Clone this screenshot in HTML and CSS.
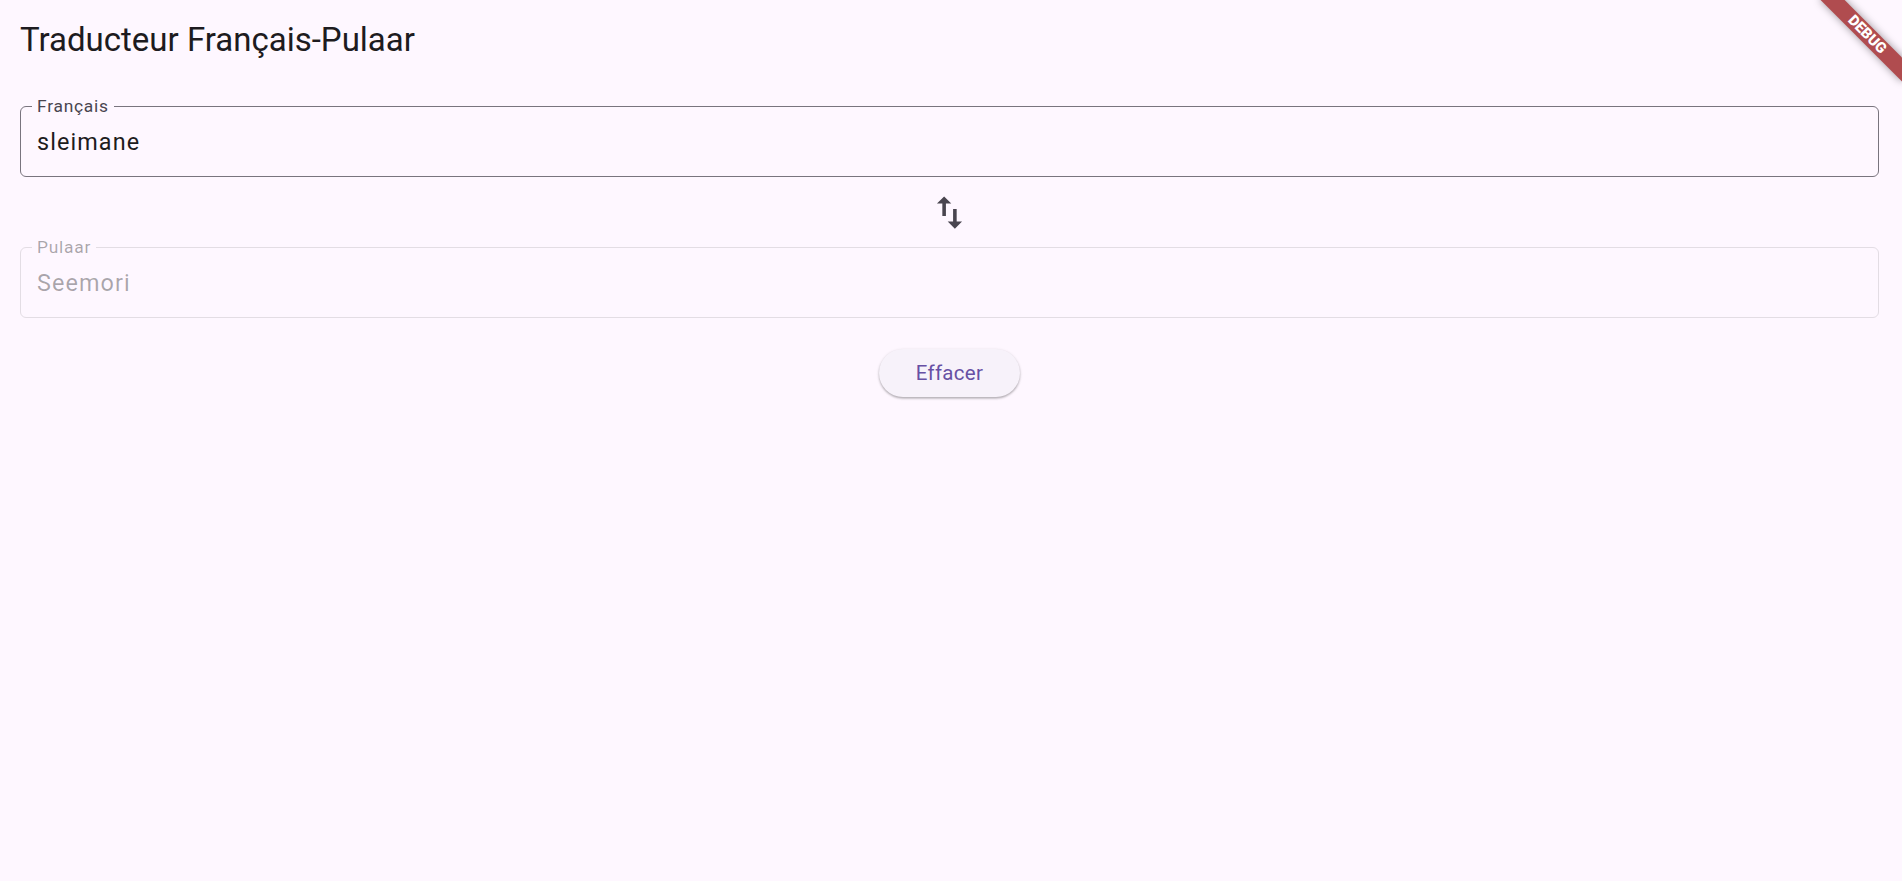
FILE: index.html
```html
<!DOCTYPE html>
<html lang="fr">
<head>
<meta charset="utf-8">
<title>Traducteur Français-Pulaar</title>
<link rel="stylesheet" href="styles.css">
</head>
<body>
<div class="app">
  <header class="appbar">
    <h1 class="appbar-title">Traducteur Français-Pulaar</h1>
  </header>
  <main class="content">
    <div class="field field-enabled">
      <span class="field-label">Français</span>
      <div class="field-value">sleimane</div>
    </div>
    <div class="swap-row">
      <button class="icon-button" type="button" aria-label="Inverser">
        <svg class="swap-icon" viewBox="0 0 24 24" aria-hidden="true">
          <path d="M16 17.01V10h-2v7.01h-3L15 21l4-3.99h-3zM9 3L5 6.99h3V14h2V6.99h3L9 3z"/>
        </svg>
      </button>
    </div>
    <div class="field field-disabled">
      <span class="field-label">Pulaar</span>
      <div class="field-value">Seemori</div>
    </div>
    <div class="actions">
      <button class="elevated-button" type="button">Effacer</button>
    </div>
  </main>
  <div class="debug-banner">DEBUG</div>
</div>
</body>
</html>
```
FILE: styles.css
```css
html, body {
  margin: 0;
  padding: 0;
  height: 100%;
  overflow: hidden;
  background: #FEF7FF;
}

body {
  font-family: Roboto, "Noto Sans", "Liberation Sans", sans-serif;
  color: #1D1B20;
}

.app {
  position: relative;
  width: 100%;
  height: 100%;
  overflow: hidden;
  background: #FEF7FF;
}

.appbar {
  height: 79px;
  display: flex;
  align-items: center;
  padding-left: 20px;
}

.appbar-title {
  margin: 0;
  font-size: 33px;
  font-weight: 400;
  line-height: normal;
  color: #1D1B20;
}

.content {
  padding: 27px 23px 0 20px;
  display: flex;
  flex-direction: column;
}

.field {
  position: relative;
  box-sizing: border-box;
  height: 71px;
  border-radius: 6px;
  display: flex;
  align-items: center;
  padding-left: 16px;
}

.field-enabled {
  border: 1px solid #79747E;
}

.field-disabled {
  border: 1px solid #E3DDE4;
}

.field-label {
  position: absolute;
  top: -11px;
  left: 11px;
  padding: 0 5px;
  background: #FEF7FF;
  font-size: 17.4px;
  letter-spacing: 0.75px;
  line-height: normal;
  color: #49454F;
}

.field-value {
  font-size: 23.4px;
  letter-spacing: 1.1px;
  line-height: normal;
  color: #1D1B20;
}

.field-disabled .field-label,
.field-disabled .field-value {
  color: rgba(29, 27, 32, 0.38);
}

.swap-row {
  height: 70px;
  display: flex;
  align-items: center;
  justify-content: center;
}

.icon-button {
  width: 58px;
  height: 58px;
  padding: 0;
  border: 0;
  border-radius: 50%;
  background: transparent;
  display: flex;
  align-items: center;
  justify-content: center;
}

.swap-icon {
  width: 43px;
  height: 43px;
  fill: #49454F;
}

.actions {
  padding-top: 31px;
  display: flex;
  justify-content: center;
}

.elevated-button {
  width: 141px;
  height: 48px;
  border: 0;
  border-radius: 24px;
  background: #F7F2FA;
  color: #6750A4;
  font-family: Roboto, "Noto Sans", "Liberation Sans", sans-serif;
  font-size: 20.5px;
  font-weight: 400;
  letter-spacing: 0.3px;
  box-shadow: 0 1.5px 2px rgba(0, 0, 0, 0.22), 0 1px 3px 0.5px rgba(0, 0, 0, 0.1);
}

.debug-banner {
  position: absolute;
  top: 26.2px;
  right: -23.1px;
  width: 116px;
  height: 17.4px;
  transform: rotate(45deg);
  background: #B04C4F;
  box-shadow: 0 0 9px rgba(0, 0, 0, 0.4);
  color: #FFFFFF;
  font-family: Roboto, "Noto Sans", "Liberation Sans", sans-serif;
  font-size: 14.8px;
  font-weight: 900;
  line-height: 17.4px;
  text-align: center;
}
```
